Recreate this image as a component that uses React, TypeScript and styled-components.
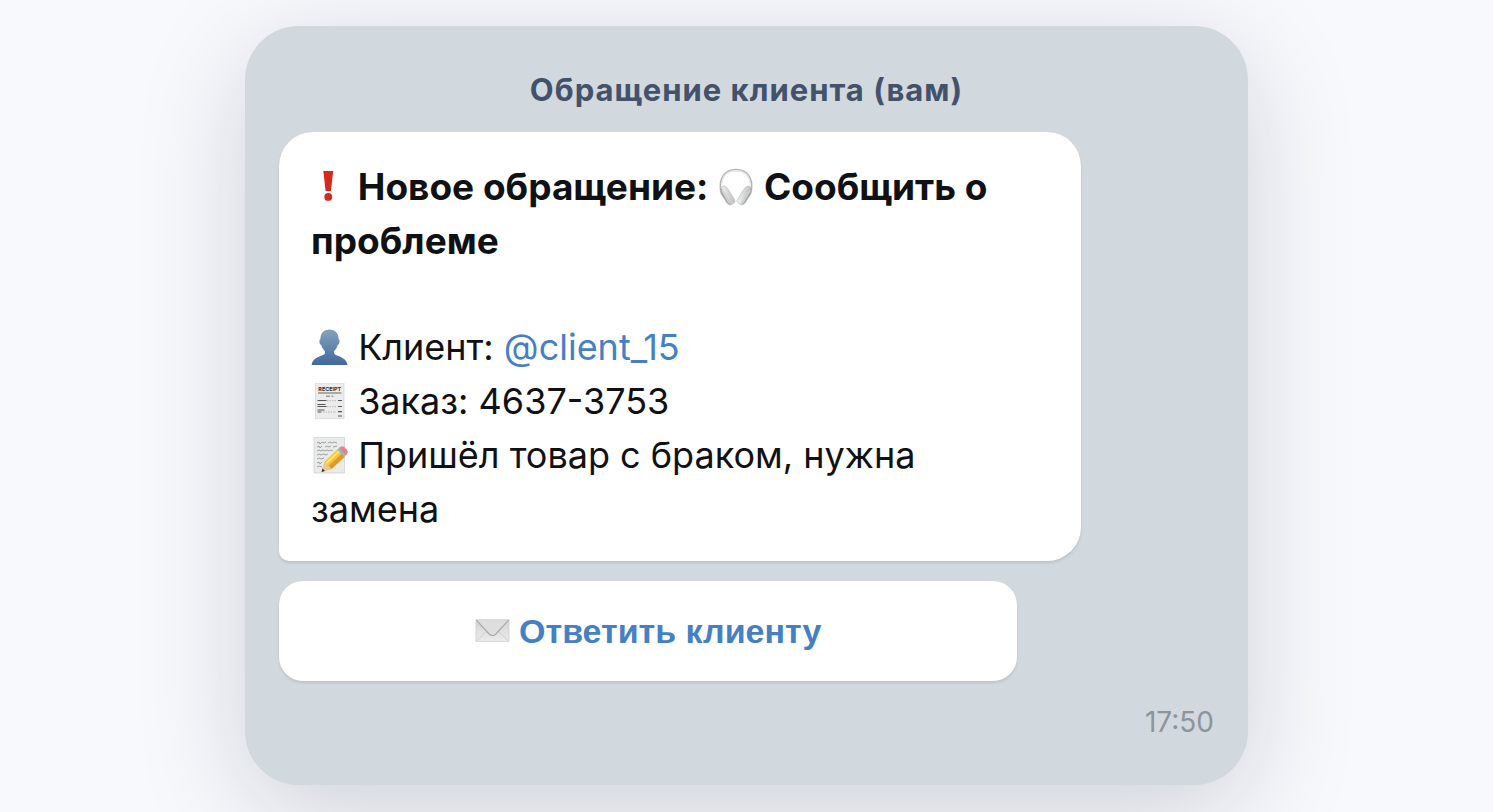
import React from 'react';
import styled, { createGlobalStyle } from 'styled-components';

const GlobalStyle = createGlobalStyle`
  * { box-sizing: border-box; }
  body {
    margin: 0;
    background: #f7f9fd;
    font-family: Inter, 'Liberation Sans', sans-serif;
    color: #0f1115;
  }
`;

const Page = styled.main`
  display: flex;
  justify-content: center;
  padding: 26px 24px 0;
  min-height: 100vh;
  overflow: hidden;
`;

const Chat = styled.section`
  display: flex;
  flex-direction: column;
  align-items: flex-start;
  align-self: flex-start;
  width: 100%;
  max-width: 1003px;
  padding: 44px 34px 46px;
  border-radius: 54px;
  background: #d1d8de;
  box-shadow: 0 27px 108px rgba(20, 20, 40, 0.17);
`;

const Title = styled.h1`
  align-self: center;
  margin: 0 0 22px;
  font-size: 31px;
  line-height: 40px;
  font-weight: 700;
  letter-spacing: 1px;
  color: #42526b;
`;

const Bubble = styled.article`
  width: 100%;
  max-width: 802px;
  padding: 28px 34px 25px 32px;
  border-radius: 34px 34px 34px 10px;
  background: #fff;
  box-shadow: 0 2px 3px rgba(0, 0, 0, 0.1);
  font-size: 36px;
  line-height: 54px;
`;

const Heading = styled.h2`
  margin: 0 0 52px;
  font-size: 37px;
  font-weight: 700;
`;

const Line = styled.p`
  margin: 0;
`;

const Mention = styled.a`
  color: #4680c4;
  text-decoration: none;
`;

const Reply = styled.button`
  width: 100%;
  max-width: 738px;
  height: 100px;
  margin-top: 20px;
  padding: 0 24px;
  border: 0;
  border-radius: 24px;
  background: #fff;
  box-shadow: 0 2px 3px rgba(0, 0, 0, 0.1);
  font: 700 34px/54px 'Liberation Sans', Arial, sans-serif;
  color: #4680c4;
  cursor: pointer;
`;

const Time = styled.time`
  align-self: flex-end;
  margin-top: 24px;
  font-size: 28px;
  line-height: 34px;
  color: #8d949c;
`;

const Emoji = styled.svg<{ $size?: number }>`
  width: ${(p) => p.$size ?? 37}px;
  height: ${(p) => p.$size ?? 37}px;
  vertical-align: -6px;
`;

const Exclamation = () => (
  <Emoji viewBox="0 0 37 37" $size={38} aria-hidden="true">
    <path d="M12 3h9.600l-2.200 19.400h-5.200z" fill="#d6281c" />
    <circle cx="16.800" cy="28.200" r="3.800" fill="#d22a1e" />
  </Emoji>
);

const Headphones = () => (
  <Emoji viewBox="0 0 37 37" $size={38} aria-hidden="true">
    <defs>
      <linearGradient id="cup" x1="0" x2="1">
        <stop offset="0" stopColor="#f1f1f1" />
        <stop offset="1" stopColor="#bebfc0" />
      </linearGradient>
    </defs>
    <path d="M4 22C2 10 8 2 18.500 2S35 10 33 22" fill="none" stroke="#b4b5b6" strokeWidth="2.400" />
    <path d="M4.500 19C4 9 9 2.600 18.500 2.600S33 9 32.500 19" fill="none" stroke="#ececec" strokeWidth="1.200" />
    <path d="M3.500 19l3.200-1.500c2 .3 4 2.500 6 6l4.500 7.500c.6 1.500.2 2.500-1 3.300l-2.700 1.600c-1.500.4-3-.5-4-2L4 25z" fill="url(#cup)" stroke="#b9babb" strokeWidth=".6" />
    <path d="M3.200 19.500c1.500 0 2 1 3.500 4l6.800 11.500c-1.500 1-3 0-4-1.500L4 25.500c-.9-2-1.200-4-.8-6z" fill="#a9aaab" />
    <path d="M4.600 21.500l7.600 13" stroke="#dcdcdc" strokeWidth="1" />
    <path d="M33.500 19l-3.200-1.500c-2 .3-4 2.500-6 6L19.800 31c-.6 1.500-.2 2.500 1 3.300l2.700 1.600c1.500.4 3-.5 4-2L33 25z" fill="url(#cup)" stroke="#b9babb" strokeWidth=".6" />
    <path d="M33.800 19.500c-1.500 0-2 1-3.500 4L23.500 35c1.500 1 3 0 4-1.500l5.500-8c.9-2 1.200-4 .8-6z" fill="#a9aaab" />
    <path d="M32.400 21.500l-7.600 13" stroke="#dcdcdc" strokeWidth="1" />
  </Emoji>
);

const Person = () => (
  <Emoji viewBox="0 0 37 37" aria-hidden="true">
    <defs>
      <linearGradient id="bust" x1="0" y1="0" x2="0" y2="1">
        <stop offset="0" stopColor="#86a2bd" />
        <stop offset="1" stopColor="#40699b" />
      </linearGradient>
    </defs>
    <path d="M18.500.5c5.700 0 9.200 3.900 9.100 9.800 1.600.2 1.300 5.200-.9 5.700-.8 3-2 4.500-3.600 6.100v2.500c1.300 2.800 12 2.700 13.400 11.400H.5c1.400-8.700 12-8.600 13.400-11.400v-2.500c-1.600-1.600-2.800-3.100-3.600-6.100-2.200-.5-2.500-5.500-.9-5.700C9.300 4.400 12.800.5 18.500.5z" fill="url(#bust)" />
  </Emoji>
);

const Receipt = () => (
  <Emoji viewBox="0 0 37 37" aria-hidden="true">
    <path d="M4.500 0H33v36l-2-.8-2 .8-2-.8-2 .8-2-.8-2 .8-2-.8-2 .8-2-.8-2 .8-2-.8-2 .8-2-.8-2 .8L4.500 36z" fill="#ececec" stroke="#d2d2d2" strokeWidth=".7" />
    <text x="18.700" y="8.400" textAnchor="middle" fontSize="5.400" fontWeight="700" fill="#333">RECEIPT</text>
    <path d="M7 10h23.500" stroke="#666" strokeWidth="1" />
    <path d="M15 13.200h4M20.500 13.200h2" stroke="#777" strokeWidth="1" />
    <path d="M6.500 17.500h9M6.500 21.500h8M6.500 23.500h9M6.500 27h7M6.500 29h4" stroke="#555" strokeWidth="1.200" />
    <path d="M16 17.700h9M16 23.700h9M12 29h13" stroke="#aaa" strokeWidth=".8" strokeDasharray="1.500 1" />
    <path d="M27 17.500h4M27 23.500h4M27 28.700h4M27 33h4" stroke="#555" strokeWidth="1.200" />
  </Emoji>
);

const Memo = () => (
  <Emoji viewBox="0 0 37 37" aria-hidden="true">
    <path d="M3 .5H33.500v35.500H3z" fill="#e9eaea" stroke="#cdcece" strokeWidth=".7" />
    <g fill="none" stroke="#8a8d90" strokeWidth=".8">
      <path d="M6 6l2-1 1 2 2-2 2 1 2-1m2 1l2-1 2 1 2-1 3 1" />
      <path d="M6 10l2-1 1 2 2-2m3 1l2-1 2 1 2-1m2 1l4-1" />
      <path d="M6 14l2-1 2 1 2-1 2 1 2-1 2 1 2-1 2 1" />
      <path d="M6 18l2-1 2 1 2-1 3 1 2-1" />
      <path d="M6 22l2-1 2 1 3-1M6 26l2-1 1 2 2-2M6 30l2-1 3 1" />
    </g>
    <path d="M10.500 35l3-10.500L27 12l6.600 7.300L20.500 32z" fill="#f5c634" />
    <path d="M17.500 29L31 16.500l3 3L20.500 32z" fill="#df9928" />
    <path d="M15.500 26L28.700 13.700" stroke="#ffe576" strokeWidth="2" />
    <path d="M10.500 35l3-10.500 7 7.500z" fill="#edc894" />
    <path d="M10.500 35l1-3.500 2.500 2.500z" fill="#333" />
    <path d="M26.300 12.700l2.700-2.500 7 7-2.800 2.500z" fill="#a8aeb3" />
    <path d="M28.200 11l2-1.500c2-1.300 7.800 4.300 6.400 6.600l-1.700 2z" fill="#e5818c" />
  </Emoji>
);

const Envelope = () => (
  <Emoji viewBox="0 0 37 37" $size={35} aria-hidden="true">
    <defs>
      <linearGradient id="paper" x1="0" y1="0" x2="0" y2="1">
        <stop offset="0" stopColor="#d3d3d3" />
        <stop offset="1" stopColor="#ececec" />
      </linearGradient>
    </defs>
    <path d="M1 6h35v23H1z" fill="url(#paper)" stroke="#cacaca" strokeWidth=".7" />
    <path d="M1.500 28.500L14 17m21.500 11.500L23 17" stroke="#c6c6c6" strokeWidth=".8" />
    <path d="M1.500 6.500L15 21.300q3.500 3 7 0L35.500 6.500z" fill="#dedede" />
    <path d="M1.500 6.500L15 21.300q3.500 3 7 0L35.500 6.500" fill="none" stroke="#a5a5a5" strokeWidth="1.200" />
  </Emoji>
);

export default function App() {
  return (
    <>
      <GlobalStyle />
      <Page>
        <Chat>
          <Title>Обращение клиента (вам)</Title>
          <Bubble>
            <Heading>
              <Exclamation /> Новое обращение: <Headphones /> Сообщить о проблеме
            </Heading>
            <Line><Person /> Клиент: <Mention href="#client_15">@client_15</Mention></Line>
            <Line><Receipt /> Заказ: 4637-3753</Line>
            <Line><Memo /> Пришёл товар с браком, нужна замена</Line>
          </Bubble>
          <Reply type="button"><Envelope /> Ответить клиенту</Reply>
          <Time dateTime="17:50">17:50</Time>
        </Chat>
      </Page>
    </>
  );
}
